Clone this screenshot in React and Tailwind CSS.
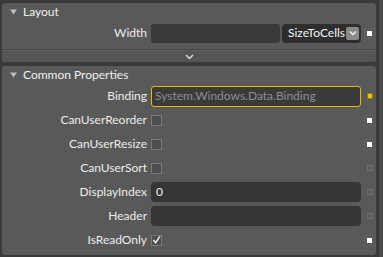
import React from "react";

const font = { fontFamily: "Lato, 'Open Sans', sans-serif" };

function Tri() {
  return (
    <svg width="7" height="6" viewBox="0 0 7 6" className="shrink-0">
      <path d="M0 0.5 L7 0.5 L3.5 5.5 Z" fill="#bdbdbd" />
    </svg>
  );
}

function Marker({ kind = "white" }) {
  if (kind === "grey") {
    return (
      <div className="w-[11px] h-[11px] flex items-center justify-center">
        <div className="w-[6px] h-[6px] border border-[#6e6e6e] bg-[#5e5e5e]" />
      </div>
    );
  }
  if (kind === "yellow") {
    return (
      <div className="w-[11px] h-[11px] flex items-center justify-center">
        <div className="w-[6px] h-[6px] bg-[#f2c200] border border-[#9a7c00]" />
      </div>
    );
  }
  return (
    <div className="w-[11px] h-[11px] flex items-center justify-center border border-dotted border-[#6a6a6a] rounded-[2px]">
      <div className="w-[5px] h-[5px] bg-white" />
    </div>
  );
}

function Row({ label, children, marker = "white" }) {
  return (
    <div className="flex items-center h-[24px]">
      <div className="w-[149px] shrink-0 text-right pr-[4px] text-[12px] text-[#ececec] leading-none">{label}</div>
      <div className="w-[210px] shrink-0 flex items-center">{children}</div>
      <div className="ml-[3px]">
        <Marker kind={marker} />
      </div>
    </div>
  );
}

function Check({ checked }) {
  return (
    <div className="w-[11px] h-[11px] border border-[#7a7a7a] bg-[#4e4e4e] flex items-center justify-center">
      {checked && (
        <svg width="10" height="10" viewBox="0 0 10 10">
          <path d="M1.5 5 L4 8 L8.8 1" stroke="#f0f0f0" strokeWidth="1.6" fill="none" />
        </svg>
      )}
    </div>
  );
}

export default function App() {
  return (
    <div className="w-[383px] h-[257px] bg-[#3a3a3a] flex overflow-hidden" style={font}>
      <div className="w-[374px] ml-[2px] flex flex-col">
        {/* Layout panel */}
        <div className="mt-[3px] h-[59px] bg-[#595959] rounded-[3px] flex flex-col">
          <div className="h-[18px] flex items-center pl-[8px] gap-[6px]">
            <Tri />
            <span className="text-[12px] text-[#f0f0f0] leading-none">Layout</span>
          </div>
          <div className="flex items-center h-[24px]">
            <div className="w-[149px] shrink-0 text-right pr-[4px] text-[12px] text-[#ececec] leading-none">Width</div>
            <div className="w-[129px] h-[19px] bg-[#3a3a3a] rounded-[3px]" />
            <div className="ml-[2px] w-[79px] h-[19px] bg-[#2e2e2e] rounded-[4px] flex items-center pl-[6px] pr-[2px]">
              <span className="text-[12px] text-[#f2f2f2] leading-none flex-1">SizeToCells</span>
              <div className="w-[13px] h-[13px] bg-[#8a8a8a] rounded-[2px] flex items-center justify-center">
                <svg width="8" height="6" viewBox="0 0 8 6">
                  <path d="M1 1.5 L4 4.5 L7 1.5" stroke="#e8e8e8" strokeWidth="1.6" fill="none" />
                </svg>
              </div>
            </div>
            <div className="ml-[3px]">
              <Marker />
            </div>
          </div>
          <div className="mt-[4px] h-[1px] bg-[#464646]" />
          <div className="h-[1px] bg-[#606060]" />
          <div className="flex-1 bg-[#555555] rounded-b-[3px] flex items-center justify-center">
            <svg width="9" height="6" viewBox="0 0 9 6">
              <path d="M1 1 L4.5 4.5 L8 1" stroke="#d8d8d8" strokeWidth="1.5" fill="none" />
            </svg>
          </div>
        </div>
        {/* Common Properties panel */}
        <div className="mt-[4px] h-[189px] bg-[#595959] rounded-[3px] flex flex-col">
          <div className="h-[18px] flex items-center pl-[8px] gap-[6px]">
            <Tri />
            <span className="text-[12px] text-[#f0f0f0] leading-none">Common Properties</span>
          </div>
          <Row label="Binding" marker="yellow">
            <div className="w-[210px] h-[21px] bg-[#3a3a3a] border border-[#e5bc00] rounded-[3px] flex items-center pl-[3px]">
              <span className="text-[12px] text-[#8e8e8e] leading-none">System.Windows.Data.Binding</span>
            </div>
          </Row>
          <Row label="CanUserReorder">
            <Check />
          </Row>
          <Row label="CanUserResize">
            <Check />
          </Row>
          <Row label="CanUserSort" marker="grey">
            <Check />
          </Row>
          <Row label="DisplayIndex" marker="grey">
            <div className="w-[210px] h-[20px] bg-[#353535] rounded-[4px] flex items-center pl-[5px]">
              <span className="text-[12px] text-[#f0f0f0] leading-none">0</span>
            </div>
          </Row>
          <Row label="Header" marker="grey">
            <div className="w-[210px] h-[20px] bg-[#353535] rounded-[4px]" />
          </Row>
          <Row label="IsReadOnly">
            <Check checked />
          </Row>
        </div>
      </div>
      <div className="w-[3px]" />
      <div className="w-[4px] bg-[#4c4c4c]" />
    </div>
  );
}
